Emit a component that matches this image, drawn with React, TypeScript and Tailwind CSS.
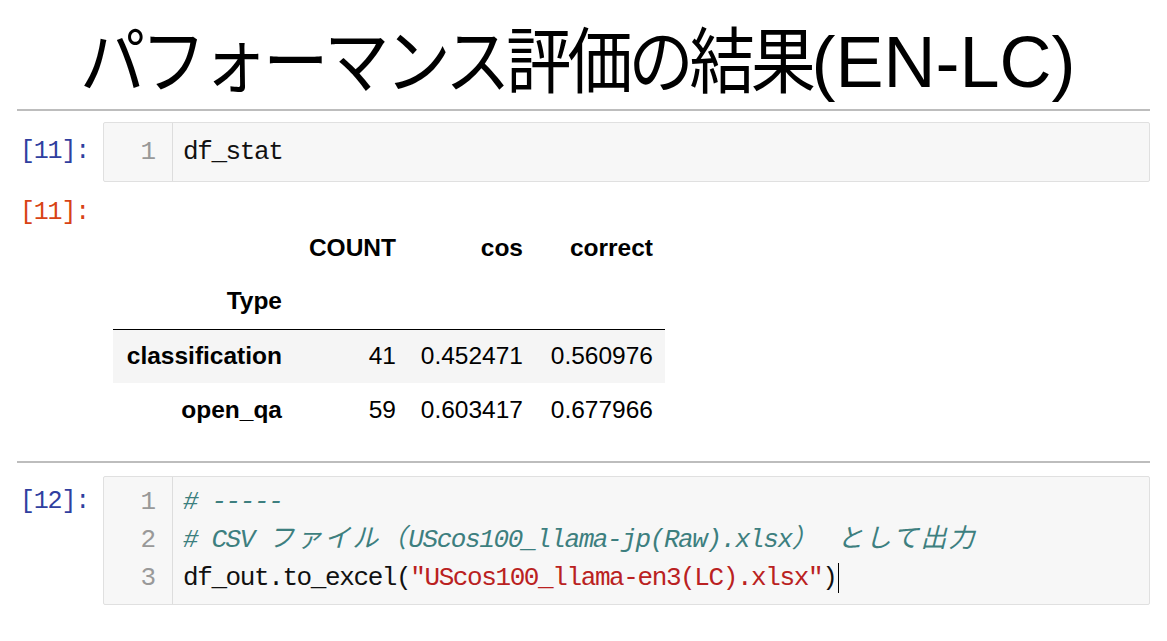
import React from "react";

const mono = "font-['Liberation_Mono','Noto_Sans_CJK_JP',monospace]";

function Prompt({ n, out }: { n: number; out?: boolean }) {
  return (
    <div
      className={`w-[103px] shrink-0 pl-[20px] ${mono} text-[25px] leading-[38px] tracking-[-1.2px] ${
        out ? "text-[#D84315]" : "text-[#303F9F]"
      }`}
    >
      [{n}]:
    </div>
  );
}

function CodeBox({
  lines,
  pt,
  pb,
}: {
  lines: React.ReactNode[];
  pt: string;
  pb: string;
}) {
  return (
    <div className="flex flex-1 border border-[#e0e0e0] bg-[#f7f7f7] rounded-[2px]">
      <div
        className={`w-[69px] shrink-0 border-r border-[#dddddd] pr-[16px] text-right ${pt} ${pb} ${mono} text-[26px] leading-[38px] text-[#999999]`}
      >
        {lines.map((_, i) => (
          <div key={i}>{i + 1}</div>
        ))}
      </div>
      <div
        className={`pl-[10px] ${pt} ${pb} ${mono} text-[26px] leading-[38px] tracking-[-1.4px] text-[#111111] whitespace-pre`}
      >
        {lines.map((l, i) => (
          <div key={i}>{l}</div>
        ))}
      </div>
    </div>
  );
}

const J = ({ children }: { children: React.ReactNode }) => (
  <span className="tracking-[2px]">{children}</span>
);

export default function App() {
  const th = "pr-[12px] text-right font-bold";
  const td = "pr-[12px] text-right";
  return (
    <div className="w-[1167px] h-[641px] bg-white overflow-hidden">
      <div className="h-[109px] pl-[80px] pt-[22px] overflow-hidden font-['Liberation_Sans','Noto_Sans_CJK_JP',sans-serif] text-[72px] leading-[80px] text-black whitespace-nowrap">
        <span className="inline-block tracking-[-4.5px] scale-x-[0.905] origin-left mr-[-77px]">
          パフォーマンス評価の結果
        </span>
        <span>(EN-LC)</span>
      </div>
      <div className="ml-[17px] mr-[17px] h-[2px] bg-[#bdbdbd]" />

      <div className="flex mt-[11px] mr-[17px]">
        <div className="pt-[11px]">
          <Prompt n={11} />
        </div>
        <CodeBox pt="pt-[10px]" pb="pb-[10px]" lines={["df_stat"]} />
      </div>

      <div className="flex mt-[12px]">
        <Prompt n={11} out />
        <div className="ml-[10px] mt-[27px] font-['Liberation_Sans',Arial,sans-serif] text-[24.5px] text-black">
          <table className="border-collapse">
            <thead>
              <tr className="h-[54px]">
                <th className="w-[181px]"></th>
                <th className={`w-[114px] ${th}`}>COUNT</th>
                <th className={`w-[127px] ${th}`}>cos</th>
                <th className={`w-[130px] ${th}`}>correct</th>
              </tr>
              <tr className="h-[54px] border-b border-black">
                <th className={th}>Type</th>
                <th></th>
                <th></th>
                <th></th>
              </tr>
            </thead>
            <tbody>
              <tr className="h-[54px] bg-[#f5f5f5]">
                <th className={th}>classification</th>
                <td className={td}>41</td>
                <td className={td}>0.452471</td>
                <td className={td}>0.560976</td>
              </tr>
              <tr className="h-[54px]">
                <th className={th}>open_qa</th>
                <td className={td}>59</td>
                <td className={td}>0.603417</td>
                <td className={td}>0.677966</td>
              </tr>
            </tbody>
          </table>
        </div>
      </div>

      <div className="ml-[17px] mr-[17px] mt-[24px] h-[2px] bg-[#bdbdbd]" />

      <div className="flex mt-[13px] mr-[17px]">
        <div className="pt-[7px]">
          <Prompt n={12} />
        </div>
        <CodeBox
          pt="pt-[6px]"
          pb="pb-[7px]"
          lines={[
            <span className="italic text-[#3D7F7F]"># -----</span>,
            <span className="italic text-[#3D7F7F]">
              # CSV <J>ファイル（</J>UScos100_llama-jp(Raw).xlsx<J>） として出力</J>
            </span>,
            <span>
              df_out.to_excel(
              <span className="text-[#BA2121]">"UScos100_llama-en3(LC).xlsx"</span>)
              <span className="inline-block w-[1px] h-[30px] bg-black align-middle ml-[2px]" />
            </span>,
          ]}
        />
      </div>
    </div>
  );
}
